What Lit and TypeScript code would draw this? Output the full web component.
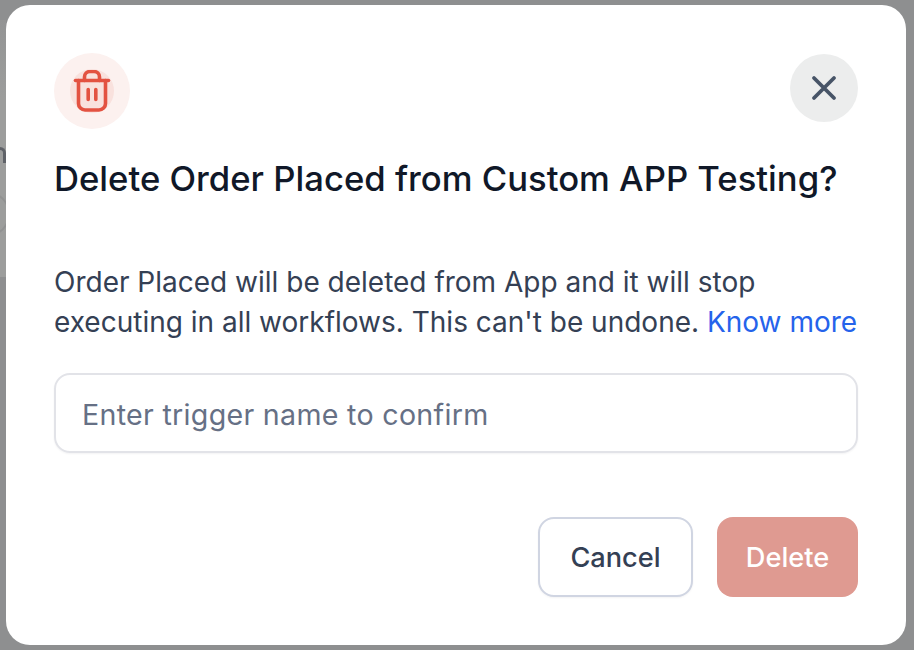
import { LitElement, html, css } from "lit";
import { customElement } from "lit/decorators.js";

@customElement("app-root")
export class AppRoot extends LitElement {
  static styles = css`
    :host {
      display: block;
      width: 914px;
      height: 650px;
      font-family: Inter, "Liberation Sans", sans-serif;
      font-optical-sizing: none;
    }
    .backdrop {
      box-sizing: border-box;
      width: 914px;
      height: 650px;
      padding: 5px 8px 5px 6px;
      background: #8e8f90;
      position: relative;
      overflow: hidden;
    }
    .behind-panel {
      position: absolute;
      left: 0;
      top: 20px;
      width: 6px;
      height: 257px;
      background: linear-gradient(#939494, #9c9d9c 30%);
    }
    .behind-ring {
      position: absolute;
      left: -32px;
      top: 192px;
      width: 38px;
      height: 40px;
      border: 2px solid #919292;
      border-radius: 50%;
    }
    .behind-stem {
      position: absolute;
      left: 0;
      top: 147px;
      width: 6px;
      height: 16px;
      border-top-right-radius: 6px;
      border-top: 3px solid #5f6268;
      border-right: 3px solid #5f6268;
      box-sizing: border-box;
    }
    .modal {
      position: relative;
      box-sizing: border-box;
      height: 640px;
      padding: 48px 48px 48px;
      background: #fff;
      border-radius: 24px;
    }
    .top {
      display: flex;
      justify-content: space-between;
      align-items: flex-start;
    }
    .trash {
      width: 76px;
      height: 76px;
      border-radius: 50%;
      background: #fcf1ef;
      display: flex;
      align-items: center;
      justify-content: center;
    }
    .trash-inner {
      width: 44px;
      height: 44px;
      border-radius: 50%;
      background: #f9e1dd;
      display: flex;
      align-items: center;
      justify-content: center;
    }
    .close {
      width: 68px;
      height: 68px;
      margin-top: 1px;
      border-radius: 50%;
      background: #eceded;
      display: flex;
      align-items: center;
      justify-content: center;
    }
    h2 {
      margin: 27px 0 0;
      font-size: 34.66px;
      line-height: 44px;
      font-weight: 550;
      color: #101828;
      white-space: nowrap;
    }
    p {
      margin: 62px 0 0;
      font-size: 28px;
      line-height: 40px;
      color: #344054;
      white-space: nowrap;
    }
    a {
      color: #2563eb;
      text-decoration: none;
    }
    .field {
      box-sizing: border-box;
      height: 80px;
      margin-top: 31px;
      padding: 3px 26px 0;
      display: flex;
      align-items: center;
      border: 2px solid #e2e3e8;
      border-radius: 16px;
      box-shadow: 0 1px 2px rgba(16, 24, 40, 0.05);
      font-size: 28.6px;
      letter-spacing: 0.3px;
      color: #667085;
    }
    .actions {
      display: flex;
      justify-content: flex-end;
      gap: 24px;
      margin-top: 64px;
    }
    .btn {
      box-sizing: border-box;
      height: 80px;
      padding-top: 1px;
      display: flex;
      align-items: center;
      justify-content: center;
      border-radius: 16px;
      font-size: 27.2px;
      font-weight: 550;
    }
    .cancel {
      width: 155px;
      border: 2px solid #d0d5e2;
      box-shadow: 0 1px 2px rgba(16, 24, 40, 0.05);
      color: #344054;
      background: #fff;
    }
    .delete {
      width: 141px;
      background: #df9a91;
      color: #fff;
    }
  `;

  render() {
    return html`
      <div class="backdrop">
        <div class="behind-panel"></div>
        <div class="behind-stem"></div>
        <div class="behind-ring"></div>
        <div class="modal">
          <div class="top">
            <div class="trash">
              <div class="trash-inner">
                <svg width="38" height="42" viewBox="0 0 38 42" fill="none" stroke="#e35241" stroke-width="3.6" stroke-linecap="round" stroke-linejoin="round">
                  <path d="M2.500 10.500h33" />
                  <path d="M5.500 10.500v23a6.500 6.500 0 0 0 6.500 6.500h14a6.500 6.500 0 0 0 6.500-6.500v-23" />
                  <path d="M11.500 10.500V7a5.500 5.500 0 0 1 5.500-5.500h4A5.500 5.500 0 0 1 26.500 7v3.500" />
                  <path d="M15.200 19.500v10M22.800 19.500v10" />
                </svg>
              </div>
            </div>
            <div class="close">
              <svg width="28" height="28" viewBox="0 0 28 28" fill="none" stroke="#475467" stroke-width="3.800" stroke-linecap="round">
                <path d="M4 4l20 20M24 4L4 24" />
              </svg>
            </div>
          </div>
          <h2>Delete Order Placed from Custom APP Testing?</h2>
          <p>
            Order Placed will be deleted from App and it will stop<br />
            executing in all workflows. This can't be undone. <a>Know more</a>
          </p>
          <div class="field">Enter trigger name to confirm</div>
          <div class="actions">
            <div class="btn cancel">Cancel</div>
            <div class="btn delete">Delete</div>
          </div>
        </div>
      </div>
    `;
  }
}
